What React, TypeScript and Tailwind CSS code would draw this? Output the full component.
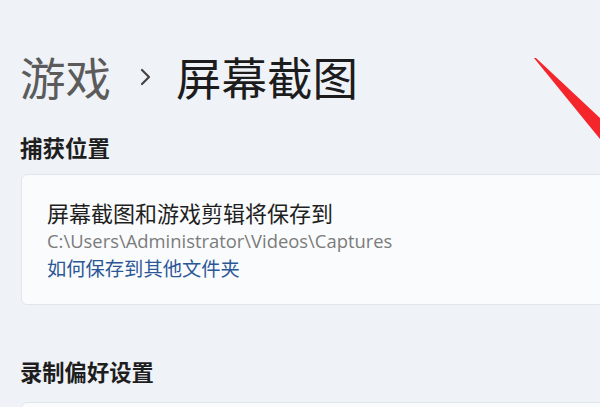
import React from "react";

export default function App() {
  const cjk = { fontFamily: '"Noto Sans CJK SC", "Noto Sans", sans-serif' };
  return (
    <div className="relative w-[600px] h-[407px] overflow-hidden bg-[#eff2f7]" style={cjk}>
      <div className="pl-[20px] pt-[53px]">
        <div className="flex items-start h-[46px] leading-none">
          <span className="text-[45.5px] leading-[46px] text-[#5b5b5b]">游戏</span>
          <svg className="ml-[28px] mr-[23px]" width="14" height="46" viewBox="0 0 14 46">
            <polyline points="3,17 10,24 3,31" fill="none" stroke="#444444" strokeWidth="2.2" strokeLinecap="round" strokeLinejoin="round" />
          </svg>
          <span className="text-[45.5px] leading-[46px] text-[#1c1c1c]">屏幕截图</span>
        </div>
        <div className="mt-[37px] text-[22.5px] leading-[22px] font-bold text-[#1e1e1e]">捕获位置</div>
      </div>
      <div className="ml-[21px] mt-[16px] h-[131px] w-[620px] rounded-[6px] border border-[#e2e5ea] bg-[#fafbfd] pl-[25px] pt-[26px]">
        <div className="text-[22px] leading-none text-[#1f1f1f]">屏幕截图和游戏剪辑将保存到</div>
        <div className="mt-[9px] text-[18.4px] leading-none text-[#7b7b7b]" style={{ fontFamily: '"Open Sans", sans-serif' }}>C:\Users\Administrator\Videos\Captures</div>
        <div className="mt-[9px] text-[19.3px] leading-none text-[#2b5797]">如何保存到其他文件夹</div>
      </div>
      <div className="pl-[20px] mt-[55px] text-[22.3px] leading-[22px] font-bold text-[#1e1e1e]">录制偏好设置</div>
      <div className="ml-[21px] mt-[20px] h-[40px] w-[620px] rounded-[6px] border border-[#e2e5ea] bg-[#fafbfd]" />
      <svg className="absolute left-0 top-0" width="600" height="407" viewBox="0 0 600 407">
        <polygon points="534,58 536,58 600,118 600,139" fill="#f4262b" />
      </svg>
    </div>
  );
}
